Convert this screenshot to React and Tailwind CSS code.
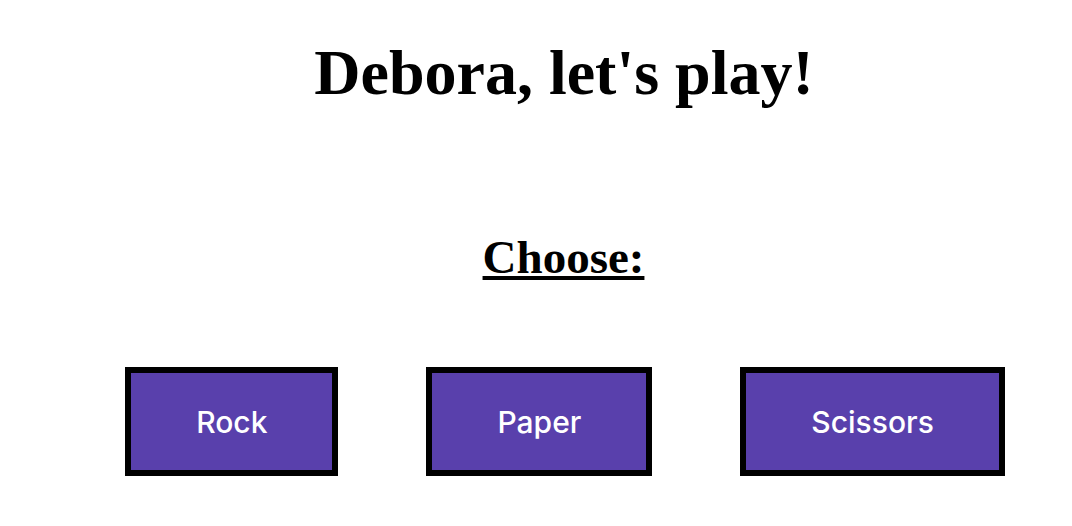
export default function App() {
  return (
    <div className="w-[1072px] h-[526px] bg-white flex flex-col items-center pl-[58px]">
      <h1 className="mt-[41px] -ml-[2px] text-[64px] leading-none font-bold text-black font-['Liberation_Serif',serif]">
        Debora, let's play!
      </h1>
      <h2 className="mt-[129px] -ml-[3px] text-[47px] leading-none font-bold underline text-black font-['Liberation_Serif',serif]">
        Choose:
      </h2>
      <div className="mt-[86px] flex gap-[88px] font-['Inter',sans-serif]">
        {['Rock', 'Paper', 'Scissors'].map((t) => (
          <button
            key={t}
            className="border-[6px] border-black bg-[#5940ac] text-white text-[30px] font-medium leading-[37px] px-[65px] pt-[31px] pb-[29px]"
          >
            {t}
          </button>
        ))}
      </div>
    </div>
  );
}
